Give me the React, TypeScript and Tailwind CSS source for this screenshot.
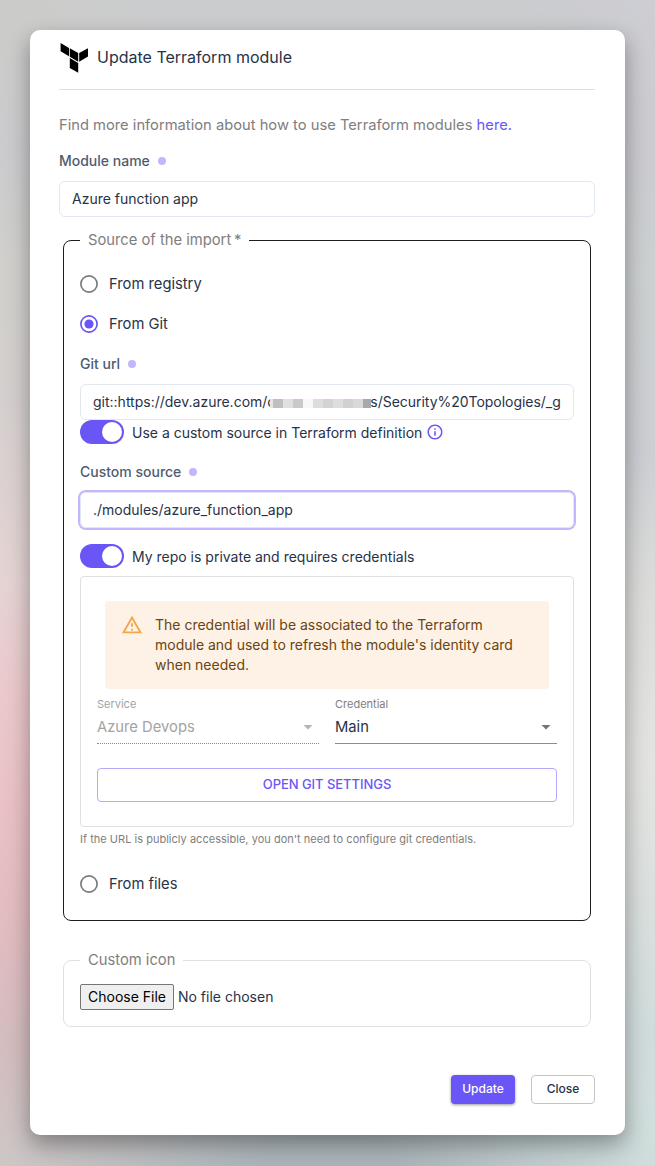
import React from "react";

const Dot = () => <span className="ml-2 size-2 rounded-full bg-[#c4b5fd]" />;

function Label({ children }: { children: string }) {
  return (
    <div className="flex h-5 items-center text-sm font-medium text-[#4f5c70]">
      <span>{children}</span>
      <Dot />
    </div>
  );
}

function Radio({ label, checked = false }: { label: string; checked?: boolean }) {
  return (
    <label className="flex h-10 items-center gap-[11px] text-[14.75px] text-[#273248]">
      <svg className="size-[18px]" viewBox="0 0 18 18" fill="none">
        <circle cx="9" cy="9" r="8.1" strokeWidth="1.7" className={checked ? "stroke-[#6a56f6]" : "stroke-[#7a7a7a]"} />
        {checked && <circle cx="9" cy="9" r="4.6" className="fill-[#6a56f6]" />}
      </svg>
      <span>{label}</span>
    </label>
  );
}

function Toggle({ label, children }: { label: string; children?: React.ReactNode }) {
  return (
    <div className="flex h-6 items-center gap-2 text-sm text-[#273248]">
      <span className="flex h-6 w-11 items-center justify-end rounded-full bg-[#6a56f6] p-0.5">
        <span className="size-5 rounded-full bg-white" />
      </span>
      <span className="pt-0.5">{label}</span>
      {children}
    </div>
  );
}

const mosaic = [
  "w-[3px] bg-[#e4e4e6]",
  "w-2.5 bg-[#bfbfc1]",
  "w-2.5 bg-[#e0e0e2]",
  "w-2.5 bg-[#c9c9cb]",
  "w-2.5 bg-[#f8f8f8]",
  "w-2.5 bg-[#dddddf]",
  "w-2.5 bg-[#d3d3d6]",
  "w-2.5 bg-[#dedee0]",
  "w-2.5 bg-[#d1d1d4]",
  "w-2.5 bg-[#d9d9db]",
  "w-[8px] bg-[#a9a9ac]",
];

export default function App() {
  return (
    <div className="flex h-[1166px] w-[655px] bg-[radial-gradient(ellipse_330px_160px_at_330px_1166px,#aab4b9_0%,#aab4b9_20%,transparent_100%),radial-gradient(ellipse_330px_160px_at_330px_0px,#cbccce_0%,#cbccce_50%,transparent_100%),linear-gradient(180deg,#cbccc9_0px,#cbcbce_150px,#d0cfcc_260px,#d4cfce_400px,#e5d3d3_580px,#eac9cc_690px,#e9c1c6_800px,#e2bcc1_920px,#d3bdbf_1050px,#cdc7c6_1166px),linear-gradient(180deg,#cdcdd3_0px,#cbcbd0_150px,#ccd0d0_270px,#cdced3_450px,#dcddda_600px,#e3e4e1_760px,#dce0de_880px,#d0dcdc_1030px,#d0dfdd_1166px)] bg-[size:100%_100%,100%_100%,50%_100%,50%_100%] bg-[position:0_0,0_0,left,right] bg-no-repeat pt-[30px] pl-[30.4px] font-['Inter',sans-serif]">
      <main className="flex h-[1105.4px] w-[594.6px] flex-col rounded-[10px] bg-white pr-[30px] pl-[28.6px] shadow-[0_9px_22px_rgba(0,0,0,0.36)]">
        <header className="flex h-[60px] shrink-0 items-start border-b border-[#dfdfe2] pt-3">
          <svg className="mt-px ml-px h-[30px] w-7" viewBox="0 0 28 30">
            <path d="M.6 0 9 4.9v8.3L.6 8.3zM9.8 5.3l8.4 4.8v8.6l-8.4-4.9zM19.2 10.1l8.8-4.9v8.4l-8.8 5.1zM9.8 15.1l8.4 4.9v9.7l-8.4-4.8z" />
          </svg>
          <h1 className="ml-[9px] pt-[3px] text-base leading-6 text-[#273248]">Update Terraform module</h1>
        </header>
        <p className="mt-[23px] h-6 text-[14.72px] leading-6 text-[#7e7e7e]">
          Find more information about how to use Terraform modules <a className="text-[#6a56f6]">here.</a>
        </p>
        <div className="mt-3.5">
          <Label>Module name</Label>
        </div>
        <div className="mt-2.5 flex h-9 shrink-0 items-center rounded-md border border-[#e2e8f0] px-3 text-sm text-[#273248]">
          Azure function app
        </div>

        <fieldset className="mx-1 mt-[11px] h-[693px] min-w-0 rounded-lg border border-[#1f1f1f] px-4">
          <legend className="h-6 px-2 text-[14.75px] leading-6 text-[#7e7e7e]">Source of the import&thinsp;*</legend>
          <div className="mt-3">
            <Radio label="From registry" />
            <Radio label="From Git" checked />
          </div>
          <div className="mt-2.5">
            <Label>Git url</Label>
          </div>
          <div className="mt-2.5 flex h-9 items-center rounded-md border border-[#e2e8f0] px-3 text-sm whitespace-nowrap text-[#273248]">
            <span>git::https://dev.azure.com/c</span>
            <span className="z-10 mt-0.5 -ml-[5px] flex h-[9px] w-[101px] shrink-0">
              {mosaic.map((c, i) => (
                <span key={i} className={c} />
              ))}
            </span>
            <span className="-ml-px tracking-[-0.03px]">s/Security%20Topologies/_g</span>
          </div>
          <Toggle label="Use a custom source in Terraform definition">
            <svg className="-ml-[4.5px] size-[18px]" viewBox="0 0 24 24" fill="#6a56f6">
              <path d="M11 7h2v2h-2zm0 4h2v6h-2zm1-9C6.48 2 2 6.48 2 12s4.48 10 10 10 10-4.48 10-10S17.52 2 12 2zm0 18c-4.41 0-8-3.59-8-8s3.59-8 8-8 8 3.59 8 8-3.59 8-8 8z" />
            </svg>
          </Toggle>
          <div className="mt-[18px]">
            <Label>Custom source</Label>
          </div>
          <div className="mt-2.5 flex h-9 items-center rounded-md border border-[#e2e8f0] px-3 text-sm text-[#273248] ring-2 ring-[#c4b5fd]">
            ./modules/azure_function_app
          </div>
          <div className="mt-4">
            <Toggle label="My repo is private and requires credentials" />
          </div>
          <div className="mt-2 h-[251px] rounded border border-[#e0e0e0] px-4 pt-6">
            <div className="mx-2 flex h-[88px] rounded bg-[#fdf2e5] pt-3.5 pl-4 text-sm leading-5 text-[#6b4410]">
              <svg className="-mt-px mr-3 size-[22px] shrink-0" viewBox="0 0 24 24" fill="#f5a64a">
                <path d="M12 5.99L19.53 19H4.47L12 5.99M12 2L1 21h22L12 2zm1 14h-2v2h2v-2zm0-6h-2v4h2v-4z" />
              </svg>
              <p className="whitespace-nowrap">
                The credential will be associated to the Terraform
                <br />
                module and used to refresh the module's identity card
                <br />
                when needed.
              </p>
            </div>
            <div className="mt-[7px] grid grid-cols-2 gap-4">
              <div className="h-12 border-b border-dotted border-[#8a8a8a] text-[#a3a3a3]">
                <div className="text-[11px] leading-4">Service</div>
                <div className="mt-[3px] flex h-6 items-center justify-between pr-1.5 text-[14.75px]">
                  Azure Devops
                  <svg className="h-[5px] w-2.5" viewBox="0 0 10 5" fill="#b5b5b5"><path d="M.5 0h9L5 4.5z" /></svg>
                </div>
              </div>
              <div className="h-12 border-b border-[#8c8c8c]">
                <div className="text-[11px] leading-4 text-[#7e7e7e]">Credential</div>
                <div className="mt-[3px] flex h-6 items-center justify-between pr-1.5 text-[14.75px] text-[#273248]">
                  Main
                  <svg className="h-[5px] w-2.5" viewBox="0 0 10 5" fill="#757575"><path d="M.5 0h9L5 4.5z" /></svg>
                </div>
              </div>
            </div>
            <button className="mt-6 h-[34px] w-full rounded border border-[#b4aafb] text-[13px] font-medium tracking-[-0.05px] text-[#6a56f6]">
              OPEN GIT SETTINGS
            </button>
          </div>
          <p className="mt-1 text-[11px] leading-4 tracking-[0.02px] text-[#7e7e7e]">
            If the URL is publicly accessible, you don't need to configure git credentials.
          </p>
          <div className="mt-[17px]">
            <Radio label="From files" />
          </div>
        </fieldset>

        <fieldset className="mx-1 mt-[27px] h-[79px] min-w-0 rounded-lg border border-[#e0e0e0] px-4">
          <legend className="h-6 px-2 text-[14.75px] leading-6 text-[#7e7e7e]">Custom icon</legend>
          <div className="mt-3 flex items-center gap-1 text-sm text-[#273248]">
            <button className="h-[26px] w-[94px] rounded-[2px] border border-[#767676] bg-[#efefef] text-black">Choose File</button>
            <span>No file chosen</span>
          </div>
        </fieldset>

        <footer className="mt-12 flex justify-end gap-4 text-xs font-medium">
          <button className="h-[29px] w-16 rounded bg-[#6a56f6] pb-0.5 text-white shadow-[0_1px_3px_rgba(0,0,0,0.4)]">Update</button>
          <button className="h-[29px] w-16 rounded border border-[#c4c4c8] pb-0.5 text-[#273248]">Close</button>
        </footer>
      </main>
    </div>
  );
}
